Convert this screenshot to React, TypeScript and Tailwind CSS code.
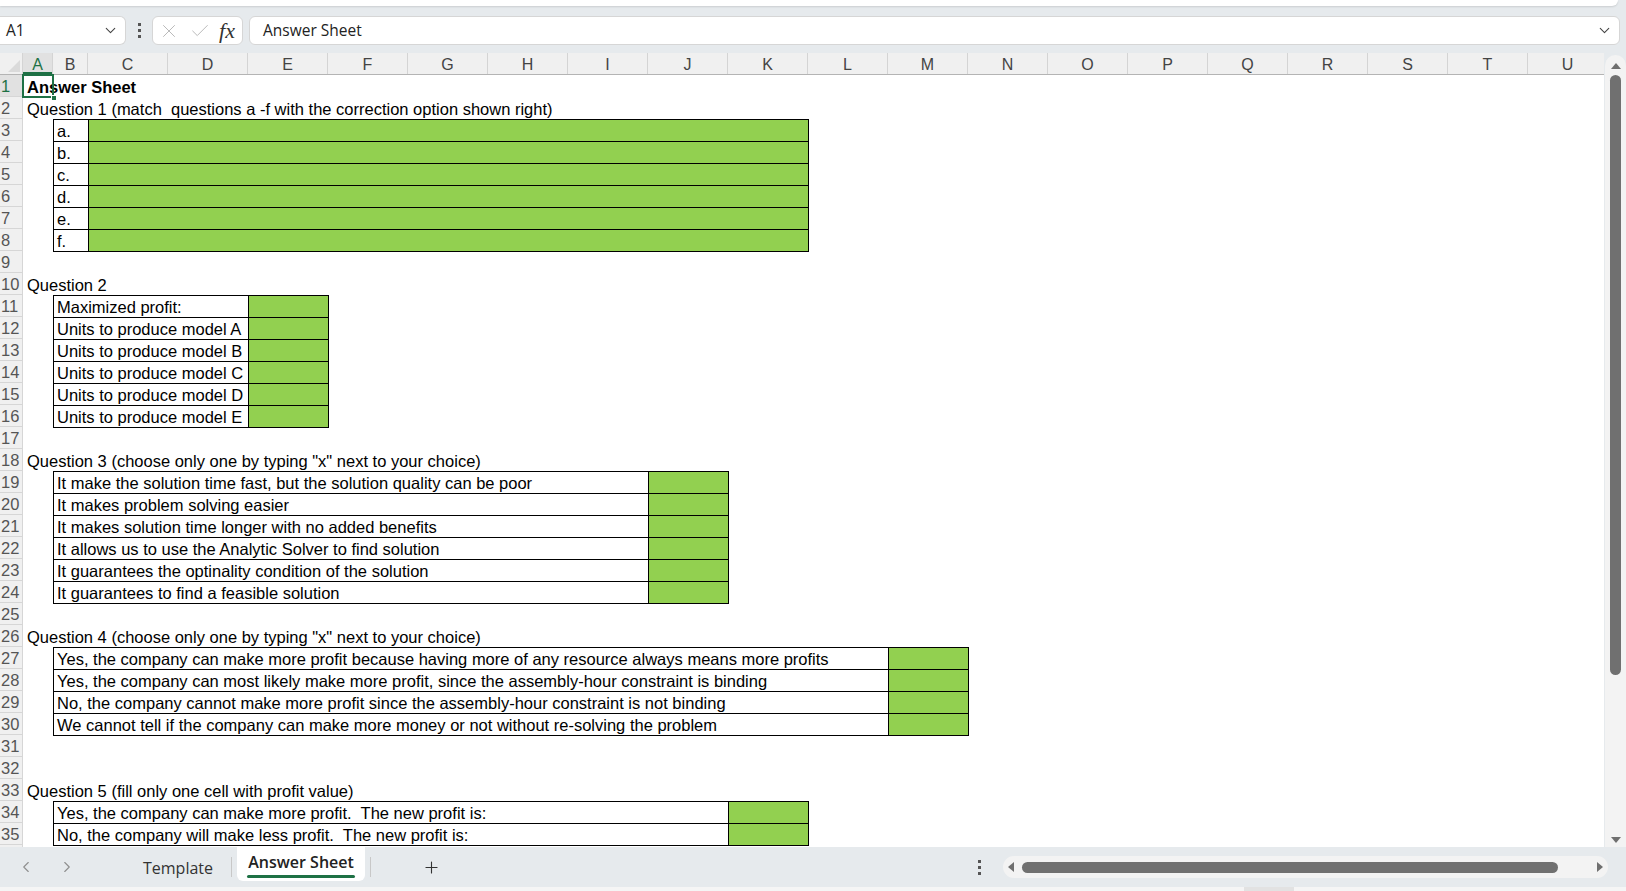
import { Check, ChevronDown, ChevronLeft, ChevronRight, Plus, X } from "lucide-react";

type SheetRow =
  | { kind: "empty" }
  | { kind: "text"; text: string; bold?: boolean }
  | { kind: "table"; label: string; labelClass: string; greenClass: string; last?: boolean };

const COLUMNS = ["A", "B", "C", "D", "E", "F", "G", "H", "I", "J", "K", "L", "M", "N", "O", "P", "Q", "R", "S", "T", "U"];

function tableRows(labels: string[], labelClass: string, greenClass: string): SheetRow[] {
  return labels.map((label, i) => ({
    kind: "table",
    label,
    labelClass,
    greenClass,
    last: i === labels.length - 1,
  }));
}

const ROWS: SheetRow[] = [
  { kind: "text", text: "Answer Sheet", bold: true },
  { kind: "text", text: "Question 1 (match  questions a -f with the correction option shown right)" },
  ...tableRows(["a.", "b.", "c.", "d.", "e.", "f."], "w-[35px]", "w-[720px]"),
  { kind: "empty" },
  { kind: "text", text: "Question 2" },
  ...tableRows(
    [
      "Maximized profit:",
      "Units to produce model A",
      "Units to produce model B",
      "Units to produce model C",
      "Units to produce model D",
      "Units to produce model E",
    ],
    "w-[195px]",
    "w-[80px]",
  ),
  { kind: "empty" },
  { kind: "text", text: 'Question 3 (choose only one by typing "x" next to your choice)' },
  ...tableRows(
    [
      "It make the solution time fast, but the solution quality can be poor",
      "It makes problem solving easier",
      "It makes solution time longer with no added benefits",
      "It allows us to use the Analytic Solver to find solution",
      "It guarantees the optinality condition of the solution",
      "It guarantees to find a feasible solution",
    ],
    "w-[595px]",
    "w-[80px]",
  ),
  { kind: "empty" },
  { kind: "text", text: 'Question 4 (choose only one by typing "x" next to your choice)' },
  ...tableRows(
    [
      "Yes, the company can make more profit because having more of any resource always means more profits",
      "Yes, the company can most likely make more profit, since the assembly-hour constraint is binding",
      "No, the company cannot make more profit since the assembly-hour constraint is not binding",
      "We cannot tell if the company can make more money or not without re-solving the problem",
    ],
    "w-[835px]",
    "w-[80px]",
  ),
  { kind: "empty" },
  { kind: "empty" },
  { kind: "text", text: "Question 5 (fill only one cell with profit value)" },
  ...tableRows(
    [
      "Yes, the company can make more profit.  The new profit is:",
      "No, the company will make less profit.  The new profit is:",
    ],
    "w-[675px]",
    "w-[80px]",
  ),
];

function RowContent({ row }: { row: SheetRow }) {
  if (row.kind === "empty") {
    return null;
  }

  if (row.kind === "text") {
    return (
      <div
        className={`whitespace-pre pl-[4px] pt-[1px] leading-[22px] ${row.bold ? "font-bold" : ""}`}
      >
        {row.text}
      </div>
    );
  }

  return (
    <div className="flex h-full">
      <div className="w-[30px] shrink-0" />
      <div
        className={`${row.labelClass} shrink-0 overflow-hidden whitespace-pre border-l border-t border-black pl-[3px] pt-[1px] leading-[21px] ${
          row.last ? "shadow-[0_1px_0_#000]" : ""
        }`}
      >
        {row.label}
      </div>
      <div
        className={`${row.greenClass} shrink-0 border-l border-t border-black bg-[#92d050] ${
          row.last
            ? "shadow-[1px_0_0_#000,0_1px_0_#000,1px_1px_0_#000]"
            : "shadow-[1px_0_0_#000]"
        }`}
      />
    </div>
  );
}

function ColumnHeader() {
  return (
    <div className="flex h-[22px] shrink-0 border-b border-[#b4b4b4] bg-[#f0f0f0] font-['Liberation_Sans',sans-serif] text-[16px] text-[#444]">
      <div className="relative w-[23px] shrink-0 border-r border-[#d4d4d4]">
        <div className="absolute bottom-[2px] right-[2px] h-0 w-0 border-b-[12px] border-l-[12px] border-b-[#dadada] border-l-transparent" />
      </div>
      {COLUMNS.map((col) => (
        <div
          key={col}
          className={`flex shrink-0 items-center justify-center border-r border-[#d4d4d4] pt-[3px] leading-none ${
            col === "A"
              ? "w-[30px] bg-[#e1e1e1] text-[#1e7145] shadow-[inset_0_-2px_0_#1e7145]"
              : col === "B"
                ? "w-[35px]"
                : "w-[80px]"
          }`}
        >
          {col}
        </div>
      ))}
    </div>
  );
}

function Grid() {
  return (
    <div className="relative flex min-w-0 flex-1 flex-col overflow-hidden bg-white">
      <ColumnHeader />
      <div className="relative flex flex-col font-['Liberation_Sans',sans-serif] text-[16.5px] text-black">
        {ROWS.map((row, i) => (
          <div key={i} className="flex h-[22px] shrink-0">
            <div
              className={`w-[23px] shrink-0 overflow-hidden whitespace-nowrap border-b border-r border-[#d6d6d6] pl-[1px] pt-[1px] text-[16.5px] leading-[21px] ${
                i === 0 ? "bg-[#e1e1e1] text-[#1e7145]" : "bg-[#f0f0f0] text-[#555]"
              }`}
            >
              {i + 1}
            </div>
            <div className="min-w-0 flex-1">
              <RowContent row={row} />
            </div>
          </div>
        ))}
        <div className="flex h-[2px] shrink-0">
          <div className="w-[23px] shrink-0 border-r border-[#d6d6d6] bg-[#f0f0f0]" />
        </div>

        {/* active cell A1 */}
        <div className="pointer-events-none absolute left-[22px] top-[-1px] h-[24px] w-[32px] border-2 border-[#1e7145]">
          <div className="absolute bottom-[-5px] right-[-5px] h-[6px] w-[6px] border border-white bg-[#1e7145]" />
        </div>
      </div>
    </div>
  );
}

function VerticalScrollbar() {
  return (
    <div className="flex w-[22px] shrink-0 flex-col pl-[1px] pt-[2px]">
      <div className="flex flex-1 flex-col items-center rounded-t-full bg-[#f3f3f3] pb-[4px] pt-[8px]">
        <div className="h-0 w-0 border-x-[5px] border-b-[6px] border-x-transparent border-b-[#6f6f6f]" />
        <div className="mt-[6px] h-[600px] w-[11px] rounded-full bg-[#707070]" />
        <div className="flex-1" />
        <div className="h-0 w-0 border-x-[5px] border-t-[6px] border-x-transparent border-t-[#6f6f6f]" />
      </div>
    </div>
  );
}

function VerticalDots() {
  return (
    <div className="flex flex-col gap-[3px]">
      <div className="h-[3px] w-[3px] bg-[#555]" />
      <div className="h-[3px] w-[3px] bg-[#555]" />
      <div className="h-[3px] w-[3px] bg-[#555]" />
    </div>
  );
}

function FormulaBar() {
  return (
    <div className="mt-[10px] flex h-[29px] shrink-0 items-stretch font-['Open_Sans',sans-serif] text-[15.5px] text-[#222]">
      <div className="flex w-[126px] shrink-0 items-center rounded-r-md border border-l-0 border-[#d6d6d6] bg-white pl-[6px] pr-[6px]">
        <span className="flex-1">A1</span>
        <ChevronDown size={17} strokeWidth={1.5} className="text-[#444]" />
      </div>
      <div className="flex w-[26px] shrink-0 items-center justify-center">
        <VerticalDots />
      </div>
      <div className="flex w-[91px] shrink-0 items-center justify-between rounded-md border border-[#d6d6d6] bg-white pl-[5px] pr-[7px]">
        <X size={22} strokeWidth={1} className="text-[#b4b4b4]" />
        <Check size={22} strokeWidth={1} className="text-[#b4b4b4]" />
        <span className="font-['Liberation_Serif',serif] text-[22px] italic leading-none text-[#333]">
          fx
        </span>
      </div>
      <div className="ml-[6px] mr-[6px] flex flex-1 items-center rounded-md border border-[#d6d6d6] bg-white pl-[13px] pr-[6px]">
        <span className="flex-1">Answer Sheet</span>
        <ChevronDown size={17} strokeWidth={1.5} className="text-[#444]" />
      </div>
    </div>
  );
}

function SheetTabs() {
  return (
    <div className="flex h-[40px] shrink-0 items-stretch font-['Open_Sans',sans-serif] text-[16px]">
      <div className="flex items-center gap-[23px] pl-[17px] text-[#8f8f8f]">
        <ChevronLeft size={18} strokeWidth={1.5} />
        <ChevronRight size={18} strokeWidth={1.5} />
      </div>
      <div className="ml-[67px] flex items-center pt-[2px] text-[#333]">Template</div>
      <div className="my-[10px] ml-[18px] w-px bg-[#c8c8c8]" />
      <div className="mb-[6px] ml-[5px] flex w-[128px] flex-col items-center rounded-b-md bg-white pt-[3px]">
        <span className="font-semibold leading-[24px] text-[#222]">Answer Sheet</span>
        <div className="mt-[1px] h-[3px] w-[108px] rounded-full bg-[#1e7145]" />
      </div>
      <div className="my-[10px] ml-[5px] w-px bg-[#c8c8c8]" />
      <div className="ml-[51px] flex items-center text-[#333]">
        <Plus size={19} strokeWidth={1.4} />
      </div>
      <div className="ml-[537px] flex items-center">
        <VerticalDots />
      </div>
      <div className="my-[9px] ml-[22px] flex w-[605px] items-center rounded-full bg-[#f3f3f3] px-[5px]">
        <div className="h-0 w-0 border-y-[5px] border-r-[6px] border-y-transparent border-r-[#6f6f6f]" />
        <div className="ml-[8px] h-[11px] w-[536px] rounded-full bg-[#707070]" />
        <div className="flex-1" />
        <div className="h-0 w-0 border-y-[5px] border-l-[6px] border-y-transparent border-l-[#6f6f6f]" />
      </div>
    </div>
  );
}

export default function App() {
  return (
    <div className="flex h-[891px] w-[1626px] flex-col overflow-hidden bg-[#e6eaed]">
      <div className="h-[6px] w-[1618px] shrink-0 rounded-br-lg bg-white shadow-[0_1px_2px_rgba(0,0,0,0.12)]" />
      <FormulaBar />
      <div className="mt-[8px] flex h-[794px] shrink-0">
        <Grid />
        <VerticalScrollbar />
      </div>
      <SheetTabs />
      <div className="flex h-[4px] shrink-0 bg-[#f5f5f5]">
        <div className="ml-[1244px] w-[50px] bg-[#e2e2e2]" />
      </div>
    </div>
  );
}
